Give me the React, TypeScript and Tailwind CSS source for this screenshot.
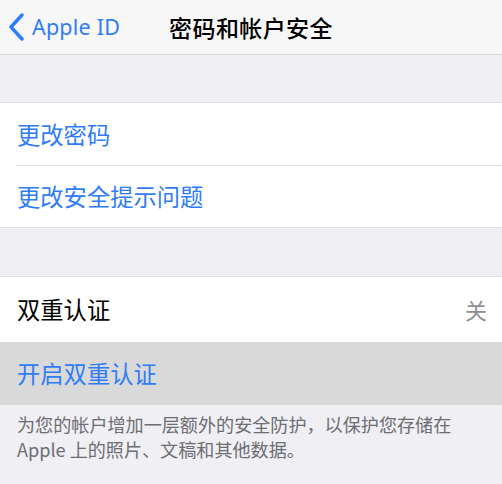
import React from "react";

export default function App() {
  const font = { fontFamily: '"Noto Sans CJK SC", "Noto Sans", sans-serif' };
  return (
    <div className="w-[502px] h-[484px] bg-[#efeff4] overflow-hidden" style={font}>
      <div className="relative h-[55px] bg-[#f7f7f7] border-b border-[#d6d6da] flex items-center justify-center">
        <div className="absolute left-[8px] top-0 h-full flex items-center text-[#2f7cf6]">
          <svg width="18" height="28" viewBox="0 0 18 28" className="mr-[6px]">
            <path d="M14 2 L3 14 L14 26" fill="none" stroke="#2f7cf6" strokeWidth="3.4" strokeLinecap="round" strokeLinejoin="round" />
          </svg>
          <span className="text-[21.5px] leading-none tracking-[0.2px]" style={{ fontFamily: '"Noto Sans", "Noto Sans CJK SC", sans-serif' }}>Apple ID</span>
        </div>
        <span className="text-[23px] font-medium text-black leading-none tracking-[0.4px]">密码和帐户安全</span>
      </div>
      <div className="h-[47px]" />
      <div className="bg-white border-y border-[#e0e0e4]">
        <div className="h-[62px] flex items-center pl-[17px] text-[23.3px] text-[#2f7cf6]">更改密码</div>
        <div className="ml-[16px] h-px bg-[#e3e3e7]" />
        <div className="h-[61px] flex items-center pl-[17px] text-[23.3px] text-[#2f7cf6]">更改安全提示问题</div>
      </div>
      <div className="h-[48px]" />
      <div className="border-t border-[#e0e0e4]">
        <div className="h-[65px] bg-white flex items-center justify-between pl-[17px] pr-[15px]">
          <span className="text-[23.3px] text-black">双重认证</span>
          <span className="text-[22px] text-[#8e8e93]">关</span>
        </div>
        <div className="h-[63px] bg-[#d9d9d9] flex items-center pl-[17px] text-[23.3px] text-[#2f7cf6]">开启双重认证</div>
      </div>
      <div className="pl-[17px] pr-[10px] pt-[7px] text-[18.1px] leading-[25px] text-[#6d6d72]">
        为您的帐户增加一层额外的安全防护，以保护您存储在
        <br />
        Apple 上的照片、文稿和其他数据。
      </div>
    </div>
  );
}
